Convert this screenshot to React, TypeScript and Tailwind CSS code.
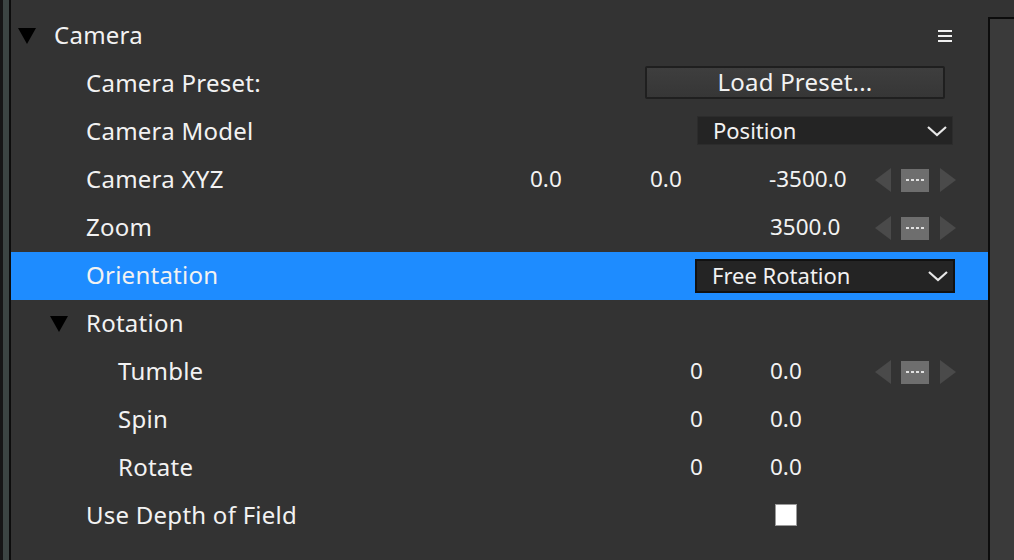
import { ReactNode } from 'react';

function Tri({ className = '' }: { className?: string }) {
  return (
    <svg width="18" height="16" viewBox="0 0 18 16" className={className}>
      <path d="M0 0 H18 L9 16 Z" fill="#000" />
    </svg>
  );
}

function Chevron() {
  return (
    <svg width="22" height="12" viewBox="0 0 22 12">
      <path d="M2 2 L11 10 L20 2" fill="none" stroke="#e8e8e8" strokeWidth="2.2" />
    </svg>
  );
}

function Spinner() {
  return (
    <div className="flex items-center">
      <svg width="16" height="24" viewBox="0 0 16 24">
        <path d="M16 0 V24 L0 12 Z" fill="#4a4a4a" />
      </svg>
      <div className="ml-[10px] flex h-[23px] w-[28px] items-center justify-center gap-[2px] bg-[#6e6e6e]">
        {[0, 1, 2, 3].map(i => (
          <div key={i} className="h-[2px] w-[3px] bg-[#e0e0e0]" />
        ))}
      </div>
      <svg width="16" height="24" viewBox="0 0 16 24" className="ml-[11px]">
        <path d="M0 0 V24 L16 12 Z" fill="#4a4a4a" />
      </svg>
    </div>
  );
}

function Row({ label, indent, children, active }: { label: ReactNode; indent: number; children?: ReactNode; active?: boolean }) {
  return (
    <div className={`flex h-12 items-center ${active ? 'bg-[#1e8cff]' : ''}`}>
      <div className="shrink-0" style={{ width: indent }} />
      <div className="flex-1 whitespace-nowrap pb-[2px] tracking-[0.25px]">{label}</div>
      {children}
    </div>
  );
}

export default function App() {
  return (
    <div
      className="flex h-[560px] w-[1014px] overflow-hidden bg-[#333333] text-[24px] leading-none text-[#f2f2f2]"
      style={{ fontFamily: '"Noto Sans", "Open Sans", sans-serif' }}
    >
      <div className="w-[3px] shrink-0 bg-[#161616]" />
      <div className="w-[6px] shrink-0 bg-[#3c4543]" />
      <div className="w-[2px] shrink-0 bg-[#0c0c0c]" />

      <div className="w-[977px] shrink-0 pt-[12px]">
        {/* Camera header */}
        <div className="flex h-12 items-center">
          <Tri className="ml-[7px]" />
          <span className="ml-[18px] pb-[2px] tracking-[0.25px]">Camera</span>
          <div className="ml-auto mr-[36px] flex w-[14px] flex-col gap-[3px]">
            <div className="h-[2px] bg-[#f0f0f0]" />
            <div className="h-[2px] bg-[#f0f0f0]" />
            <div className="h-[2px] bg-[#f0f0f0]" />
          </div>
        </div>

        <Row label="Camera Preset:" indent={75}>
          <div className="mb-[3px] mr-[43px] flex h-[33px] w-[300px] items-center justify-center rounded-[2px] border-2 border-[#1f1f1f] bg-gradient-to-b from-[#3e3e3e] to-[#363636] pb-[2px] text-[24px] tracking-[0.2px]">
            Load Preset...
          </div>
        </Row>

        <Row label="Camera Model" indent={75}>
          <div className="mb-[3px] mr-[35px] flex h-[29px] w-[256px] items-center justify-between border border-[#2c2c2c] bg-[#242424] pl-[15px] pr-[4px] text-[22px]">
            <span className="pb-[2px]">Position</span>
            <Chevron />
          </div>
        </Row>

        <Row label="Camera XYZ" indent={75}>
          <div className="flex items-center text-[22.5px]">
            <span className="w-[120px] pb-[2px]">0.0</span>
            <span className="w-[119px] pb-[2px]">0.0</span>
            <span className="w-[106px] pb-[2px]">-3500.0</span>
            <Spinner />
            <div className="w-[32px]" />
          </div>
        </Row>

        <Row label="Zoom" indent={75}>
          <div className="flex items-center text-[22.5px]">
            <span className="w-[105px] pb-[2px]">3500.0</span>
            <Spinner />
            <div className="w-[32px]" />
          </div>
        </Row>

        <Row label="Orientation" indent={75} active>
          <div className="mb-[1px] mr-[33px] flex h-[34px] w-[260px] items-center justify-between border-2 border-[#111] bg-[#242424] pl-[15px] pr-[4px] text-[22px]">
            <span className="pb-[2px]">Free Rotation</span>
            <Chevron />
          </div>
        </Row>

        <div className="flex h-12 items-center">
          <Tri className="ml-[39px]" />
          <span className="ml-[18px] pb-[2px] tracking-[0.25px]">Rotation</span>
        </div>

        <Row label="Tumble" indent={107}>
          <div className="flex items-center text-[22.5px]">
            <span className="w-[80px] pb-[2px]">0</span>
            <span className="w-[105px] pb-[2px]">0.0</span>
            <Spinner />
            <div className="w-[32px]" />
          </div>
        </Row>

        <Row label="Spin" indent={107}>
          <div className="flex items-center text-[22.5px]">
            <span className="w-[80px] pb-[2px]">0</span>
            <span className="w-[218px] pb-[2px]">0.0</span>
          </div>
        </Row>

        <Row label="Rotate" indent={107}>
          <div className="flex items-center text-[22.5px]">
            <span className="w-[80px] pb-[2px]">0</span>
            <span className="w-[218px] pb-[2px]">0.0</span>
          </div>
        </Row>

        <Row label="Use Depth of Field" indent={75}>
          <div className="mb-[2px] mr-[191px] h-[22px] w-[22px] border border-[#9a9a9a] bg-white" />
        </Row>
      </div>

      <div className="flex-1 pt-[17px]">
        <div className="h-full border-l-2 border-t-2 border-[#0c0c0c] bg-[#3a3a3a]" />
      </div>
    </div>
  );
}
